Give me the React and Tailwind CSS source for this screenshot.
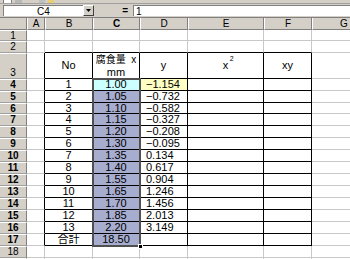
import React from 'react';

const colW = ['w-[18px]', 'w-[48px]', 'w-[47px]', 'w-[48px]', 'w-[76px]', 'w-[48px]', 'w-[64px]'];
const letters = ['A', 'B', 'C', 'D', 'E', 'F', 'G'];

const B = ['1','2','3','4','5','6','7','8','9','10','11','12','13','合計'];
const C = ['1.00','1.05','1.10','1.15','1.20','1.30','1.35','1.40','1.55','1.65','1.70','1.85','2.20','18.50'];
const D = ['−1.154','−0.732','−0.582','−0.327','−0.208','−0.095','0.134','0.617','0.904','1.246','1.456','2.013','3.149',''];

const rowH = {
  1: 'h-[11px]', 2: 'h-[12px]', 3: 'h-[26px]',
  4: 'h-[12px]', 5: 'h-[12px]', 6: 'h-[11px]', 7: 'h-[12px]', 8: 'h-[12px]', 9: 'h-[12px]',
  10: 'h-[12px]', 11: 'h-[12px]', 12: 'h-[12px]', 13: 'h-[12px]', 14: 'h-[12px]', 15: 'h-[12px]',
  16: 'h-[12px]', 17: 'h-[12px]', 18: 'h-[12px]', 19: 'h-[12px]',
};

function Cell({ r, c }) {
  const tableRow = r >= 3 && r <= 17;
  const rb = tableRow && c <= 5 ? 'border-r-black' : 'border-r-[#c8c8c8]';
  const bb = r >= 2 && r <= 17 && c >= 1 && c <= 5 ? 'border-b-black' : 'border-b-[#c8c8c8]';
  let bg = 'bg-white';
  let content = null;
  let align = 'justify-center';
  if (r === 3) {
    if (c === 1) content = 'No';
    if (c === 2)
      content = (
        <div className="flex flex-col items-center leading-[12px]">
          <span className="text-[10px]">腐食量&nbsp;&nbsp;x</span>
          <span>mm</span>
        </div>
      );
    if (c === 3) content = 'y';
    if (c === 4)
      content = (
        <span className="relative">
          x<span className="absolute left-[7px] -top-[5px] text-[7px] leading-[7px]">2</span>
        </span>
      );
    if (c === 5) content = 'xy';
  }
  if (r >= 4 && r <= 17) {
    const i = r - 4;
    if (c === 1) content = B[i];
    if (c === 2) {
      content = C[i];
      bg = r === 4 ? 'bg-[#ccffff]' : 'bg-[#a7adcf]';
    }
    if (c === 3) {
      content = D[i];
      align = 'justify-start pl-[6px]';
      if (r === 4) bg = 'bg-[#ffffc4]';
    }
  }
  return (
    <div
      className={`shrink-0 ${colW[c]} ${bg} border-r border-b ${rb} ${bb} flex items-center ${align} overflow-hidden whitespace-nowrap`}
    >
      {content}
    </div>
  );
}

function Row({ r }) {
  const sel = r >= 4 && r <= 17;
  return (
    <div className={`flex ${rowH[r]} shrink-0`}>
      <div
        className={`shrink-0 w-[27px] bg-[#d4d0c8] border-r border-b border-r-[#808080] border-b-[#a0a0a0] border-t border-t-white flex justify-center ${
          r === 3 ? 'items-end' : 'items-center'
        } text-[10px] leading-[10px] ${sel ? 'font-bold' : ''}`}
      >
        {r <= 18 ? r : ''}
      </div>
      {letters.map((_, c) => (
        <Cell key={c} r={r} c={c} />
      ))}
    </div>
  );
}

export default function App() {
  const rows = [];
  for (let r = 1; r <= 19; r++) rows.push(r);
  return (
    <div className="relative w-[350px] h-[259px] overflow-hidden bg-white font-['Liberation_Sans','Noto_Sans_CJK_JP',sans-serif] text-[11px] leading-[11px] text-black">
      {/* toolbar remnant */}
      <div className="flex h-[4px] bg-[#d4d0c8] border-b border-[#a0a0a0] items-start gap-[3px] pl-[3px]">
        <div className="w-[9px] h-[3px] bg-white border-x border-[#808080]" />
        <div className="w-[7px] h-[3px] bg-[#b8b8b8]" />
        <div className="w-[6px] h-[3px] bg-[#c0c0c0] ml-[14px]" />
        <div className="w-[6px] h-[3px] bg-[#e8d070]" />
      </div>
      {/* formula bar */}
      <div className="flex h-[13px] bg-[#d4d0c8] items-center">
        <div className="ml-[3px] w-[80px] h-[11px] bg-white border-t border-l border-[#808080] flex items-center justify-center text-[10px]">
          C4
        </div>
        <div className="w-[11px] h-[11px] bg-[#d4d0c8] border border-t-white border-l-white border-r-[#404040] border-b-[#404040] flex items-center justify-center">
          <svg width="5" height="3" viewBox="0 0 5 3">
            <polygon points="0,0 5,0 2.5,3" fill="#000" />
          </svg>
        </div>
        <div className="w-[39px] flex justify-end pr-[5px] text-[10px] font-bold">=</div>
        <div className="flex-1 h-[11px] bg-white border-t border-l border-[#808080] flex items-center pl-[2px] text-[10px]">
          1
        </div>
      </div>
      {/* column headers */}
      <div className="flex h-[13px] border-t border-[#808080]">
        <div className="shrink-0 w-[27px] bg-[#d4d0c8] border-r border-b border-[#808080]" />
        {letters.map((l, c) => (
          <div
            key={l}
            className={`shrink-0 ${colW[c]} bg-[#d4d0c8] border-r border-b border-[#808080] border-l border-l-white flex items-center justify-center text-[10px] ${
              c === 2 ? 'font-bold' : ''
            }`}
          >
            {l}
          </div>
        ))}
      </div>
      {rows.map((r) => (
        <Row key={r} r={r} />
      ))}
      {/* selection outline */}
      <div className="absolute left-[92px] top-[78px] w-[49px] h-[169px] border-2 border-[#505050] pointer-events-none" />
      <div className="absolute left-[138px] top-[244px] w-[5px] h-[5px] bg-black border border-white" />
    </div>
  );
}
